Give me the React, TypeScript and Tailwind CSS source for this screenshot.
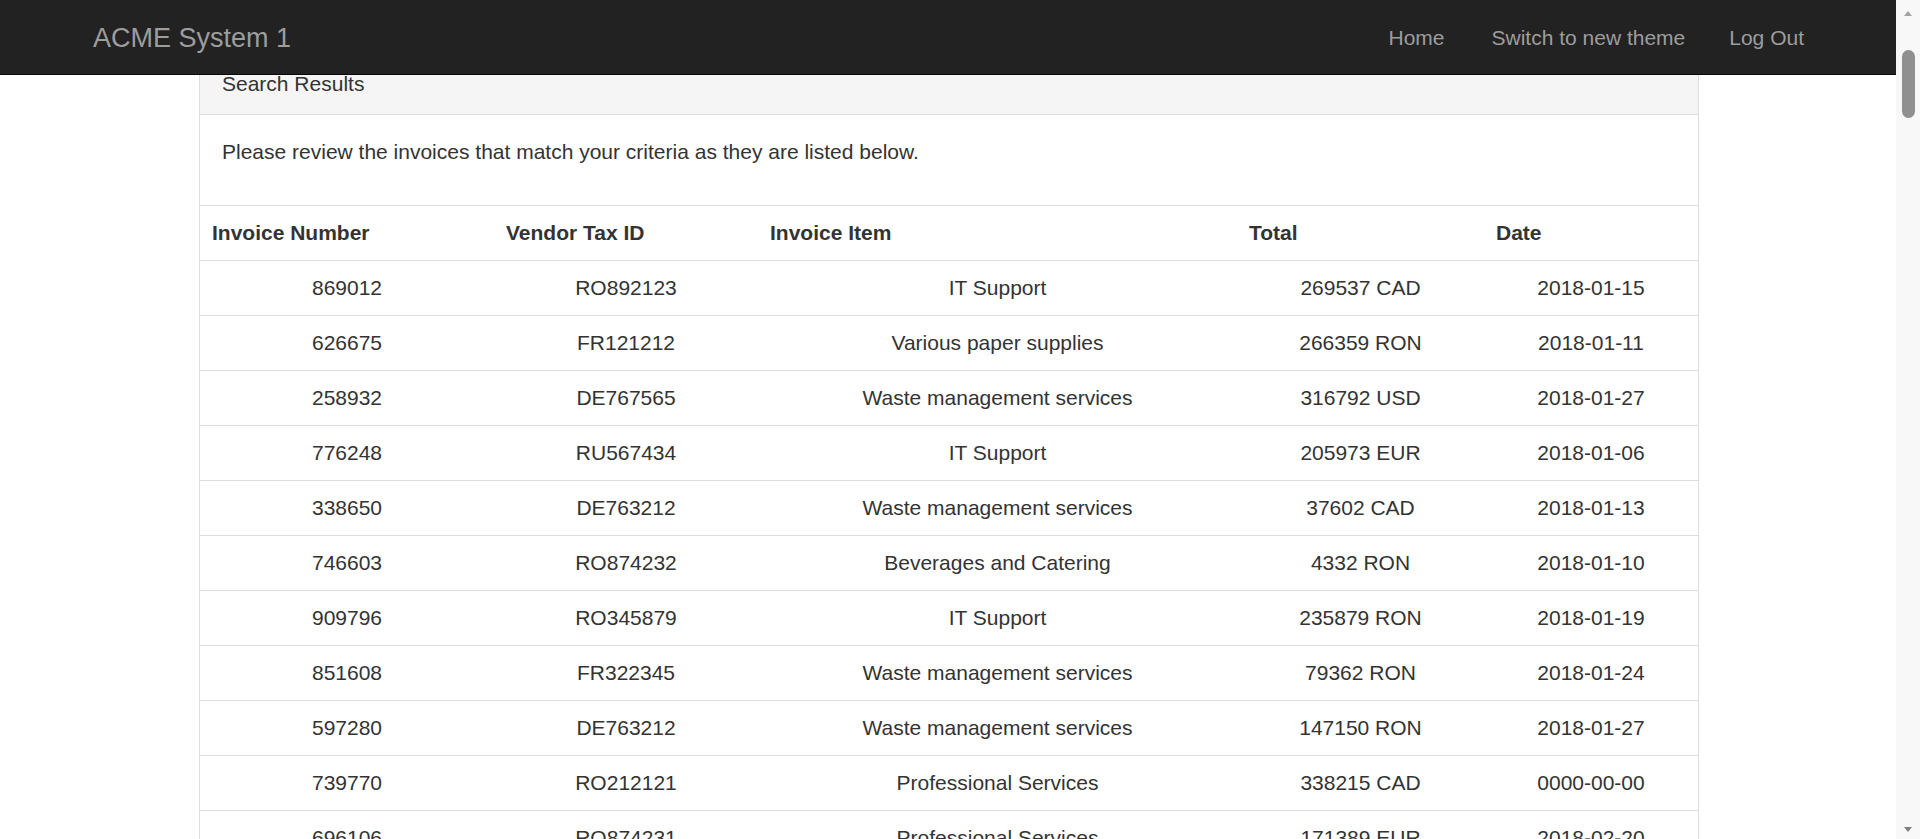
const invoices = [
  { no: '869012', tax: 'RO892123', item: 'IT Support', total: '269537 CAD', date: '2018-01-15' },
  { no: '626675', tax: 'FR121212', item: 'Various paper supplies', total: '266359 RON', date: '2018-01-11' },
  { no: '258932', tax: 'DE767565', item: 'Waste management services', total: '316792 USD', date: '2018-01-27' },
  { no: '776248', tax: 'RU567434', item: 'IT Support', total: '205973 EUR', date: '2018-01-06' },
  { no: '338650', tax: 'DE763212', item: 'Waste management services', total: '37602 CAD', date: '2018-01-13' },
  { no: '746603', tax: 'RO874232', item: 'Beverages and Catering', total: '4332 RON', date: '2018-01-10' },
  { no: '909796', tax: 'RO345879', item: 'IT Support', total: '235879 RON', date: '2018-01-19' },
  { no: '851608', tax: 'FR322345', item: 'Waste management services', total: '79362 RON', date: '2018-01-24' },
  { no: '597280', tax: 'DE763212', item: 'Waste management services', total: '147150 RON', date: '2018-01-27' },
  { no: '739770', tax: 'RO212121', item: 'Professional Services', total: '338215 CAD', date: '0000-00-00' },
  { no: '696106', tax: 'RO874231', item: 'Professional Services', total: '171389 EUR', date: '2018-02-20' },
];

const cols = 'grid grid-cols-[294px_264px_479px_247px_214px] h-[55px] border-t border-[#dddddd] items-center';

function Navbar() {
  return (
    <nav className="h-[75px] shrink-0 bg-[#222222] border-b border-[#080808] flex items-center justify-between pt-[2px] pl-[93px] pr-[92px]">
      <span className="text-[27px] leading-[30px] text-[#9d9d9d]">ACME System 1</span>
      <ul className="flex items-center text-[21px] leading-[30px] text-[#9d9d9d]">
        <li className="pl-[22px] pr-[25px]">Home</li>
        <li className="px-[22px]">Switch to new theme</li>
        <li className="pl-[22px]">Log Out</li>
      </ul>
    </nav>
  );
}

function Scrollbar() {
  return (
    <div className="w-[24px] h-full bg-[#f8f8f8] flex flex-col items-center">
      <svg width="10" height="26" viewBox="0 0 10 26" className="shrink-0">
        <path d="M1 16 L5 11 L9 16 Z" fill="#a3a3a3" />
      </svg>
      <div className="mt-[24px] w-[13px] h-[68px] rounded-full bg-[#909090]" />
      <div className="flex-1" />
      <svg width="10" height="14" viewBox="0 0 10 14" className="shrink-0">
        <path d="M1 2 L5 7 L9 2 Z" fill="#808080" />
      </svg>
    </div>
  );
}

export default function App() {
  return (
    <div className="h-[839px] w-[1920px] overflow-hidden flex bg-white font-['Liberation_Sans',Arial,sans-serif] text-[#333333]">
      <div className="w-[1896px] h-full flex flex-col">
        <Navbar />
        <main className="flex-1 overflow-hidden">
          <div className="-mt-[22px] ml-[199px] w-[1500px] border border-[#dddddd] bg-white">
            <div className="h-[61px] bg-[#f5f5f5] border-b border-[#dddddd] px-[22px] flex items-center text-[21px] leading-[30px]">
              Search Results
            </div>
            <div className="pt-[22px] pb-[23px] px-[22px] text-[21px] leading-[30px]">
              <p className="mb-[15px]">Please review the invoices that match your criteria as they are listed below.</p>
            </div>
            <div className="text-[21px] leading-[30px]">
              <div className={cols + ' font-bold'}>
                <span className="px-[12px]">Invoice Number</span>
                <span className="px-[12px]">Vendor Tax ID</span>
                <span className="px-[12px]">Invoice Item</span>
                <span className="px-[12px]">Total</span>
                <span className="px-[12px]">Date</span>
              </div>
              {invoices.map((r) => (
                <div key={r.no} className={cols + ' text-center'}>
                  <span className="px-[12px]">{r.no}</span>
                  <span className="px-[12px]">{r.tax}</span>
                  <span className="px-[12px]">{r.item}</span>
                  <span className="px-[12px]">{r.total}</span>
                  <span className="px-[12px]">{r.date}</span>
                </div>
              ))}
            </div>
          </div>
        </main>
      </div>
      <Scrollbar />
    </div>
  );
}
